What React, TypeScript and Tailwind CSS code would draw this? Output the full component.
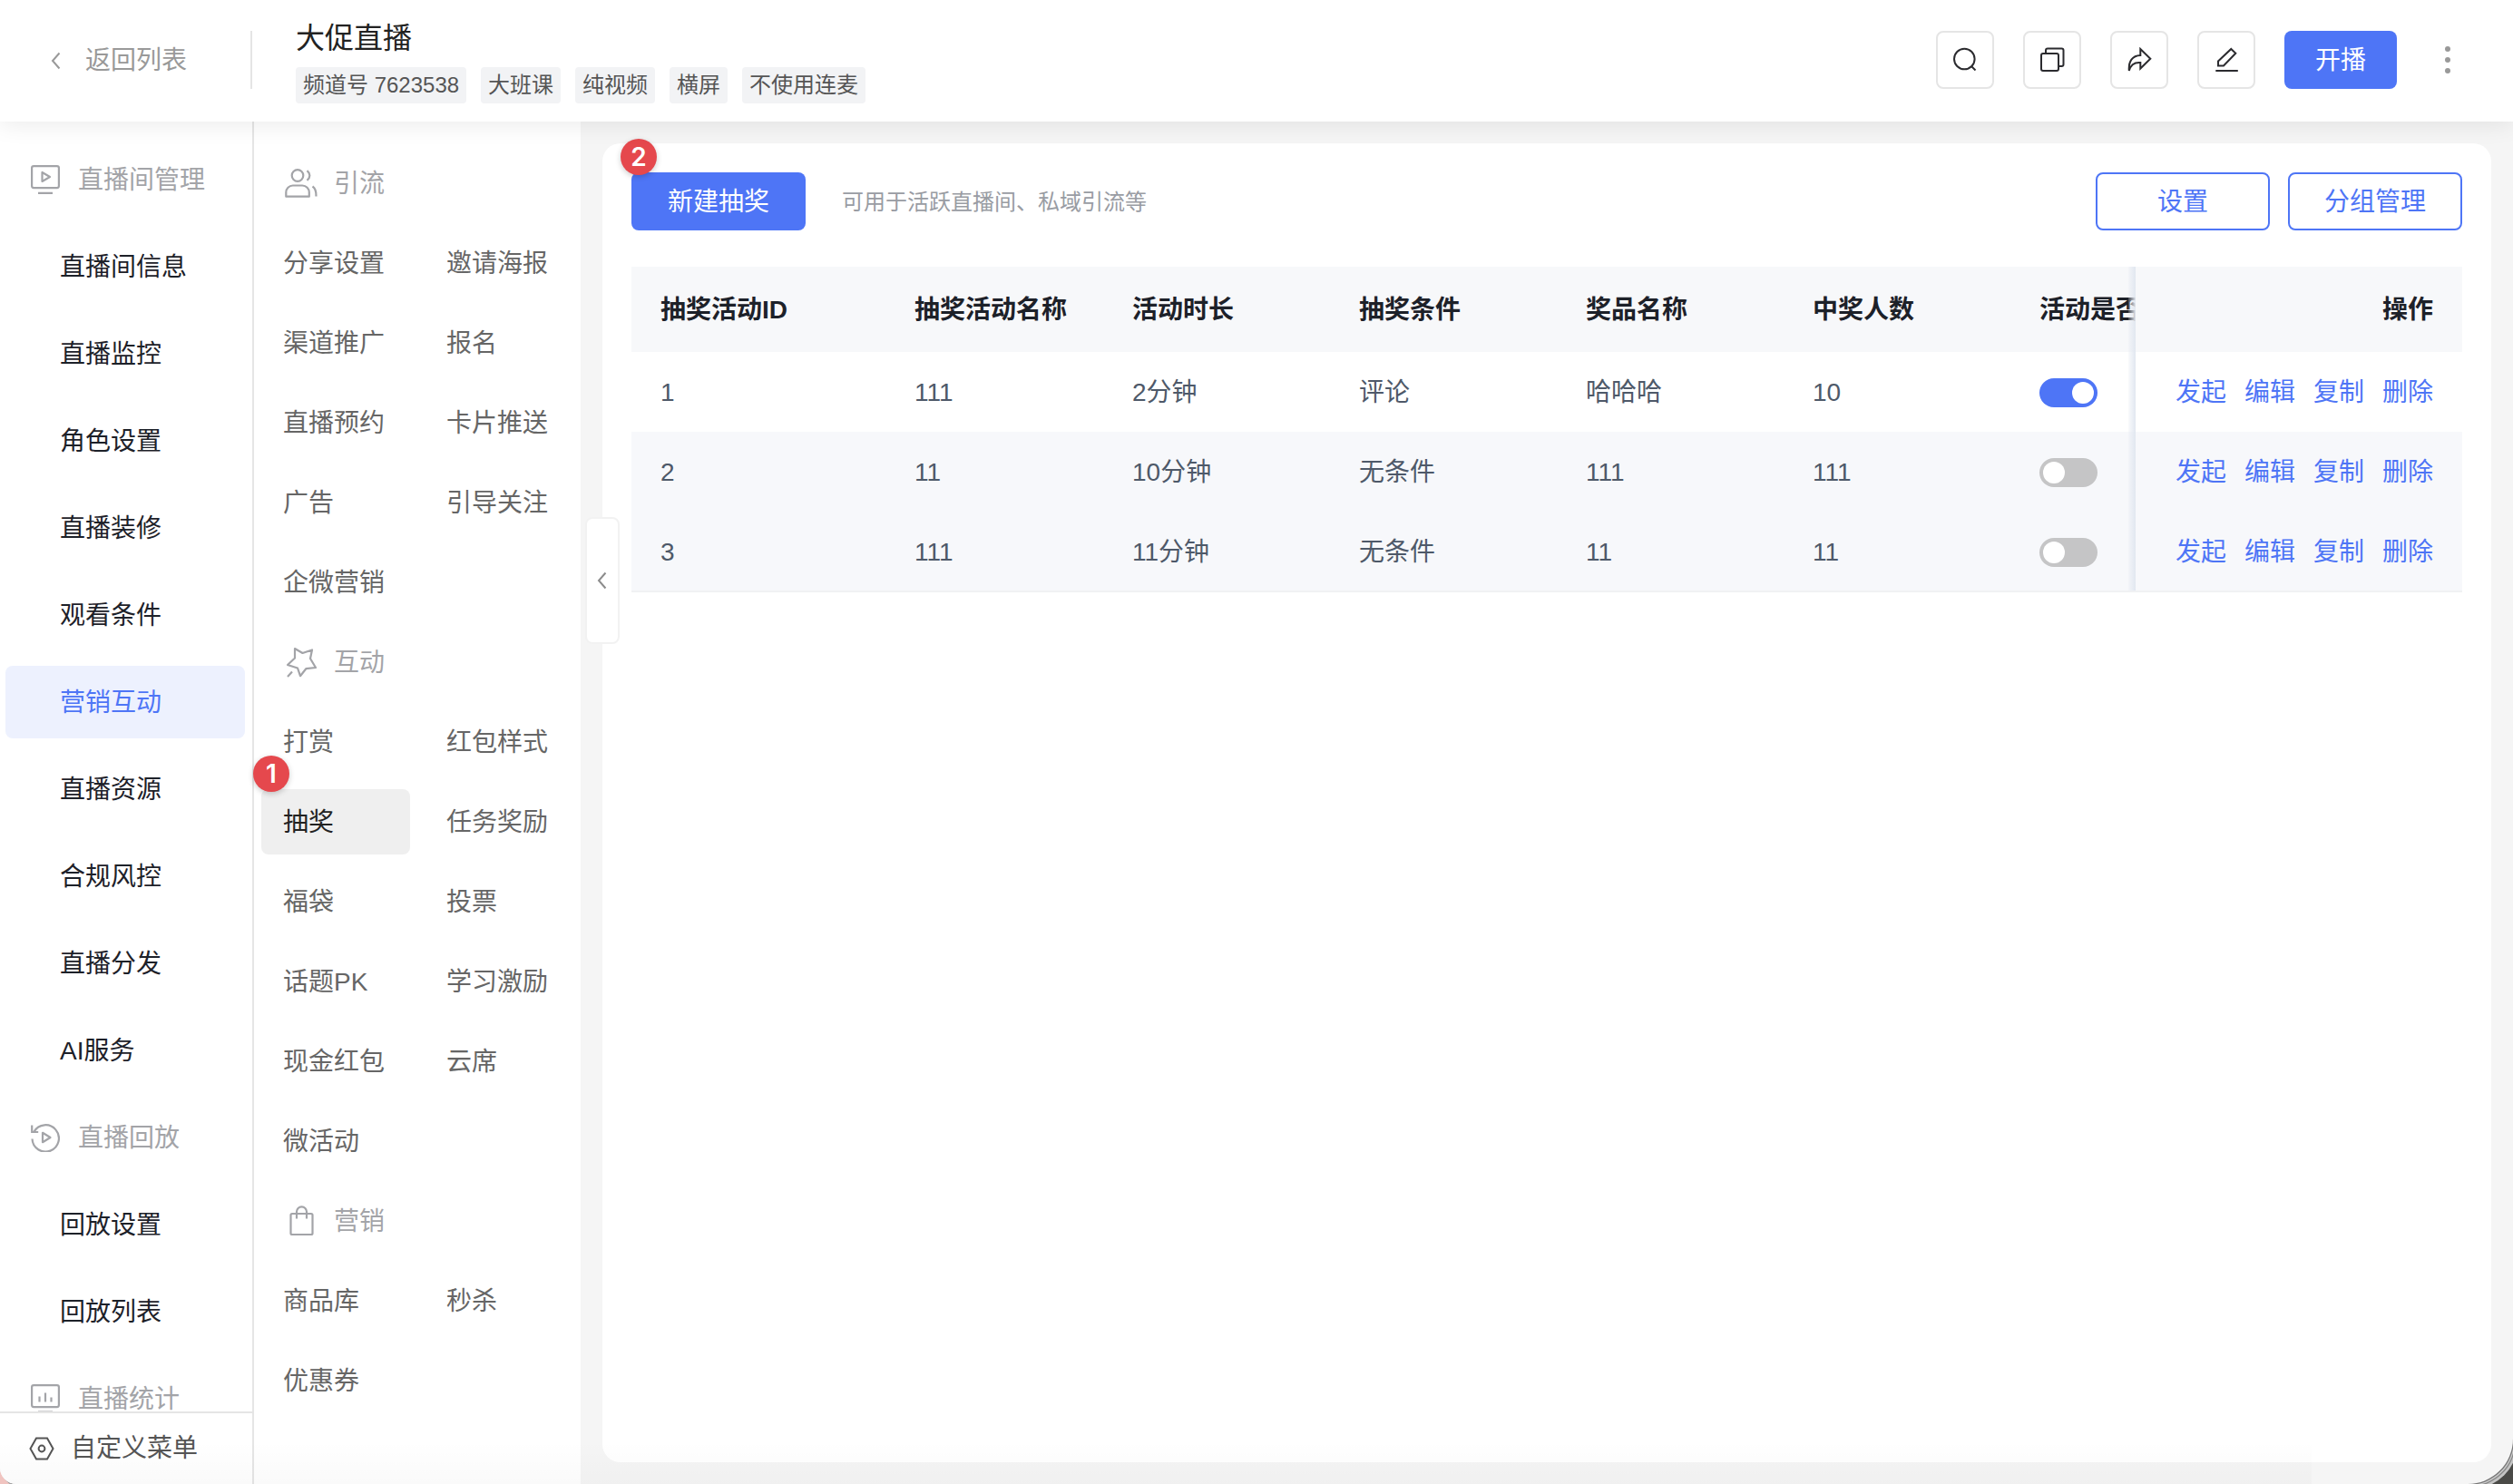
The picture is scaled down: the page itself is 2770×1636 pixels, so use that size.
import { useState } from 'react'
import { clsx } from 'clsx'

type NavItem = { label: string; icon?: React.ReactNode }

const TAGS = ['频道号 7623538', '大班课', '纯视频', '横屏', '不使用连麦']

const MAIN_NAV: NavItem[] = [
  { label: '直播间管理', icon: <MonitorIcon /> },
  { label: '直播间信息' },
  { label: '直播监控' },
  { label: '角色设置' },
  { label: '直播装修' },
  { label: '观看条件' },
  { label: '营销互动' },
  { label: '直播资源' },
  { label: '合规风控' },
  { label: '直播分发' },
  { label: 'AI服务' },
  { label: '直播回放', icon: <ReplayIcon /> },
  { label: '回放设置' },
  { label: '回放列表' },
  { label: '直播统计', icon: <StatsIcon /> },
]

const SUB_NAV = [
  {
    title: '引流',
    icon: <UsersIcon />,
    items: ['分享设置', '邀请海报', '渠道推广', '报名', '直播预约', '卡片推送', '广告', '引导关注', '企微营销'],
  },
  {
    title: '互动',
    icon: <StarIcon />,
    items: ['打赏', '红包样式', '抽奖', '任务奖励', '福袋', '投票', '话题PK', '学习激励', '现金红包', '云席', '微活动'],
  },
  {
    title: '营销',
    icon: <BagIcon />,
    items: ['商品库', '秒杀', '优惠券'],
  },
]

const ROWS = [
  { id: 1, name: '111', duration: '2分钟', condition: '评论', prize: '哈哈哈', winners: 10, enabled: true },
  { id: 2, name: '11', duration: '10分钟', condition: '无条件', prize: '111', winners: 111, enabled: false },
  { id: 3, name: '111', duration: '11分钟', condition: '无条件', prize: '11', winners: 11, enabled: false },
]

const ACTIONS = ['发起', '编辑', '复制', '删除']

export default function App() {
  return (
    <div className="h-screen overflow-hidden bg-linear-to-r from-[#f0c4c0] from-50% to-[#4a4a47] to-50% font-['Liberation_Sans','Noto_Sans_CJK_SC',sans-serif] text-[28px] leading-10">
      <div className="relative flex h-full flex-col overflow-hidden rounded-br-[50px] rounded-bl-[18px] bg-[#f5f5f5] shadow-[1px_1px_0_#777,2px_2px_0_#ccc,3px_3px_0_#888,5px_5px_0_#c4c4c4]">
        <Header />
        <div className="flex min-h-0 flex-1">
          <MainNav />
          <SubNav />
          <main className="relative min-w-0 flex-1 p-6">
            <button
              aria-label="收起"
              className="absolute top-[436px] left-[5px] flex h-[140px] w-[38px] items-center justify-center rounded-lg border-2 border-[#f2f2f2] bg-white text-[#8c8c8c]"
            >
              <Chevron />
            </button>
            <LotteryPanel />
          </main>
        </div>
        <div className="pointer-events-none absolute bottom-0 left-0 h-12 w-[92%] bg-linear-to-t from-black/2 to-transparent" />
      </div>
    </div>
  )
}

function Header() {
  return (
    <header className="z-10 flex h-[134px] flex-shrink-0 items-center bg-white pb-[2px] shadow-[0_4px_24px_rgba(0,0,0,0.08)]">
      <div className="flex h-16 w-[278px] items-center border-r-2 border-[#e5e5e5] pl-[54px]">
        <a href="#" className="flex items-center gap-6 pt-0.5 text-[#999]">
          <Chevron />
          返回列表
        </a>
      </div>
      <div className="flex flex-col gap-2 pl-12">
        <h1 className="text-[32px] leading-[48px] text-[#222]">大促直播</h1>
        <div className="flex gap-4">
          {TAGS.map((t) => (
            <span key={t} className="rounded bg-[#f2f3f5] px-2 text-2xl leading-10 text-[#555]">{t}</span>
          ))}
        </div>
      </div>
      <div className="ml-auto flex items-center gap-8 pr-12">
        <IconBtn label="搜索"><SearchIcon /></IconBtn>
        <IconBtn label="复制"><CopyIcon /></IconBtn>
        <IconBtn label="分享"><ShareIcon /></IconBtn>
        <IconBtn label="编辑"><EditIcon /></IconBtn>
        <button className="h-16 w-[124px] rounded-lg bg-[#4e75f6] pt-0.5 text-white">开播</button>
        <button aria-label="更多" className="flex w-12 flex-col items-center gap-[6px] text-[#999]">
          <span className="size-[6px] rounded-full bg-current" />
          <span className="size-[6px] rounded-full bg-current" />
          <span className="size-[6px] rounded-full bg-current" />
        </button>
      </div>
    </header>
  )
}

function IconBtn({ label, children }: { label: string; children: React.ReactNode }) {
  return (
    <button
      aria-label={label}
      className="flex size-16 items-center justify-center rounded-lg border-2 border-[#e5e5e5] text-[#2b2b2f]"
    >
      {children}
    </button>
  )
}

function MainNav() {
  return (
    <aside className="flex w-[280px] flex-shrink-0 flex-col border-r-2 border-[#e5e5e5] bg-white">
      <nav className="flex min-h-0 flex-1 flex-col gap-4 overflow-hidden pt-6 pr-2 pl-[6px]">
        {MAIN_NAV.map(({ label, icon }) =>
          icon ? (
            <div key={label} className="flex h-20 flex-shrink-0 items-center gap-5 pl-7 text-[#a3a4a8]">
              {icon}
              <span className="pt-0.5">{label}</span>
            </div>
          ) : (
            <a
              key={label}
              href="#"
              className={clsx(
                'flex h-20 flex-shrink-0 items-center rounded-lg pt-0.5 pl-[60px]',
                label === '营销互动' ? 'bg-[#edf1fe] text-[#4e75f6]' : 'text-[#1d2129]'
              )}
            >
              {label}
            </a>
          )
        )}
      </nav>
      <button className="flex h-20 flex-shrink-0 items-center gap-[18px] border-t-2 border-[#e5e5e5] pl-8 text-[#555]">
        <HexIcon />
        自定义菜单
      </button>
    </aside>
  )
}

function SubNav() {
  return (
    <nav className="flex w-[360px] flex-shrink-0 flex-col gap-4 bg-white px-2 pt-8">
      {SUB_NAV.map((group) => (
        <section key={group.title} className="grid grid-cols-[164px_164px] gap-4">
          <h2 className="col-span-2 flex h-[72px] items-center gap-4 pl-6 text-[#a3a4a8]">
            {group.icon}
            <span className="pt-0.5">{group.title}</span>
          </h2>
          {group.items.map((item) => (
            <a
              key={item}
              href="#"
              className={clsx(
                'relative flex h-[72px] items-center rounded-lg pt-0.5 pl-6',
                item === '抽奖' ? 'bg-[#efefef] text-[#222]' : 'text-[#666]'
              )}
            >
              {item === '抽奖' && <Badge className="-top-[37px] -left-[9px]">1</Badge>}
              {item}
            </a>
          ))}
        </section>
      ))}
    </nav>
  )
}

function Badge({ className, children }: { className: string; children: React.ReactNode }) {
  return (
    <span
      className={clsx(
        "absolute flex size-10 items-center justify-center rounded-full bg-[#e5484d] font-['Inter',sans-serif] text-[28px] font-semibold text-white shadow-[0_2px_6px_rgba(0,0,0,0.2)]",
        className
      )}
    >
      {children}
    </span>
  )
}

function LotteryPanel() {
  return (
    <section className="h-full rounded-[20px] bg-white px-8 pt-8">
      <div className="flex items-center">
        <button className="relative h-16 w-48 rounded-lg bg-[#4e75f6] pt-0.5 text-white">
          <Badge className="-top-[37px] -left-3">2</Badge>
          新建抽奖
        </button>
        <p className="ml-10 pt-0.5 text-2xl text-[#999ca3]">可用于活跃直播间、私域引流等</p>
        <div className="ml-auto flex gap-5">
          <button className="h-16 w-48 rounded-lg border-2 border-[#4e75f6] pt-0.5 text-[#4e75f6]">设置</button>
          <button className="h-16 w-48 rounded-lg border-2 border-[#4e75f6] pt-0.5 text-[#4e75f6]">分组管理</button>
        </div>
      </div>
      <table className="mt-10 w-full table-fixed border-b-2 border-[#f0f1f3] text-left text-[#4e5969]">
        <colgroup>
          <col className="w-[280px]" />
          <col className="w-[240px]" />
          <col className="w-[250px]" />
          <col className="w-[250px]" />
          <col className="w-[250px]" />
          <col className="w-[250px]" />
          <col />
          <col className="w-[360px]" />
        </colgroup>
        <thead className="bg-[#f7f8fa] text-[#1d2129]">
          <tr className="h-[94px]">
            {['抽奖活动ID', '抽奖活动名称', '活动时长', '抽奖条件', '奖品名称', '中奖人数'].map((h) => (
              <th key={h} className="pt-0.5 pl-8 font-semibold whitespace-nowrap">{h}</th>
            ))}
            <th className="overflow-hidden pt-0.5 pl-8 font-semibold whitespace-nowrap">活动是否</th>
            <FixedCell as="th">操作</FixedCell>
          </tr>
        </thead>
        <tbody>
          {ROWS.map((row) => (
            <LotteryRow key={row.id} row={row} />
          ))}
        </tbody>
      </table>
    </section>
  )
}

function LotteryRow({ row }: { row: (typeof ROWS)[0] }) {
  const [enabled, setEnabled] = useState(row.enabled)

  return (
    <tr className={clsx('h-[88px]', row.id > 1 && 'bg-[#f7f8fb]')}>
      <td className="pt-0.5 pl-8">{row.id}</td>
      <td className="pt-0.5 pl-8">{row.name}</td>
      <td className="pt-0.5 pl-8">{row.duration}</td>
      <td className="pt-0.5 pl-8">{row.condition}</td>
      <td className="pt-0.5 pl-8">{row.prize}</td>
      <td className="pt-0.5 pl-8">{row.winners}</td>
      <td className="pt-0.5 pl-8">
        <input
          type="checkbox"
          role="switch"
          aria-label="活动是否"
          checked={enabled}
          onChange={(e) => setEnabled(e.target.checked)}
          className="block h-8 w-16 appearance-none rounded-full bg-[#c5c5c6] p-1 before:block before:size-6 before:rounded-full before:bg-white checked:bg-[#4e75f6] checked:before:ml-auto"
        />
      </td>
      <FixedCell as="td">
        <div className="flex justify-end gap-5 font-normal text-[#4e75f6]">
          {ACTIONS.map((a) => (
            <button key={a}>{a}</button>
          ))}
        </div>
      </FixedCell>
    </tr>
  )
}

// last column, with the scroll shadow on its left edge
function FixedCell({ as: Tag, children }: { as: 'th' | 'td'; children: React.ReactNode }) {
  return (
    <Tag className="relative pt-0.5 pr-8 text-right font-semibold before:absolute before:inset-y-0 before:-left-2 before:w-2 before:bg-linear-to-r before:from-[#e1e7f0]/20 before:to-[#e1e7f0]">
      {children}
    </Tag>
  )
}

/* ---------- icons ---------- */

function Chevron() {
  return (
    <svg width="16" height="20" viewBox="0 0 16 20" fill="none" stroke="currentColor" strokeWidth="2">
      <path d="M11.500 1.500 4 10l7.500 8.500" />
    </svg>
  )
}

function SearchIcon() {
  return (
    <svg width="28" height="28" viewBox="0 0 28 28" fill="none" stroke="currentColor" strokeWidth="2">
      <circle cx="13.300" cy="13" r="11.300" />
      <path d="m21 21 4.500 4.500" />
    </svg>
  )
}

function CopyIcon() {
  return (
    <svg width="28" height="28" viewBox="0 0 28 28" fill="none" stroke="currentColor" strokeWidth="2">
      <rect x="2" y="7" width="19" height="19" rx="2" />
      <path d="M7 7V3.500a2 2 0 0 1 2-2h15.500a2 2 0 0 1 2 2V19a2 2 0 0 1-2 2H21" />
    </svg>
  )
}

function ShareIcon() {
  return (
    <svg width="28" height="28" viewBox="0 0 28 28" fill="none" stroke="currentColor" strokeWidth="2">
      <path d="M15.300 9V2l11 10.700-11 10.800V17C9 16.500 4.500 19.500 2.800 26 2 15.500 6.500 9.200 15.300 9Z" />
    </svg>
  )
}

function EditIcon() {
  return (
    <svg width="28" height="28" viewBox="0 0 28 28" fill="none" stroke="currentColor" strokeWidth="2">
      <path d="m19.300 2 5 4.800L11 20.500H5v-5L19.300 2ZM2.300 26h24.500" />
    </svg>
  )
}

function MonitorIcon() {
  return (
    <svg width="32" height="32" viewBox="0 0 32 32" fill="none" stroke="currentColor" strokeWidth="2.200">
      <rect x="1.100" y="1.100" width="29.800" height="24" rx="2" />
      <path d="M12.500 8v10l8.500-5-8.500-5ZM8 30.800h16" strokeLinejoin="round" />
    </svg>
  )
}

function ReplayIcon() {
  return (
    <svg width="32" height="32" viewBox="0 0 32 32" fill="none" stroke="currentColor" strokeWidth="2.200">
      <path d="M3.500 9.500a14.700 14.700 0 1 1-2 8M1.200 2.500v7.500h7" />
      <path d="M13 10.800v10.400l8.500-5.200-8.500-5.200Z" strokeLinejoin="round" />
    </svg>
  )
}

function StatsIcon() {
  return (
    <svg width="32" height="32" viewBox="0 0 32 32" fill="none" stroke="currentColor" strokeWidth="2.200">
      <rect x="1.100" y="1.100" width="29.800" height="24" rx="2" />
      <path d="M9.500 13.500v6M16 9.500v10M22.500 14.500v5M8 30.500h16" />
    </svg>
  )
}

function HexIcon() {
  return (
    <svg width="28" height="28" viewBox="0 0 28 28" fill="none" stroke="currentColor" strokeWidth="2">
      <path d="M8 2.500h12L26.500 14 20 25.500H8L1.500 14 8 2.500Z" />
      <circle cx="14" cy="14" r="3.400" />
    </svg>
  )
}

function UsersIcon() {
  return (
    <svg width="40" height="36" viewBox="0 0 40 36" fill="none" stroke="currentColor" strokeWidth="2.200">
      <circle cx="16" cy="9.500" r="6.300" />
      <path d="M3.300 32.700V28a7.500 7.500 0 0 1 7.500-7.500h10.500a7.500 7.500 0 0 1 7.500 7.500v4.700H3.300Z" strokeLinejoin="round" />
      <path d="M26.500 4.200c3.800 3.200 3.800 7.400 0 10.600M32.500 21.500c3 2 4.200 5.500 4 11" />
    </svg>
  )
}

function StarIcon() {
  return (
    <svg width="40" height="36" viewBox="0 0 40 36" fill="none" stroke="currentColor" strokeWidth="2.200">
      <path d="m13 3 8.500 5L32 4.500 30 14l6 10-10.700 1.200-6.300 8-3-8.700L5 21l8-7.500V3ZM5 34l5-5.500" strokeLinejoin="round" />
    </svg>
  )
}

function BagIcon() {
  return (
    <svg width="40" height="36" viewBox="0 0 40 36" fill="none" stroke="currentColor" strokeWidth="2.200">
      <rect x="8.500" y="10" width="24" height="23" rx="1.500" />
      <path d="M15 15.500V7.800a5.500 5.500 0 0 1 11 0v7.700" />
    </svg>
  )
}
